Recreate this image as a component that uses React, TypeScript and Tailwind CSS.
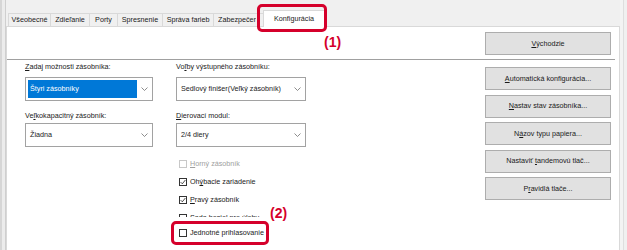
import type { ReactNode } from "react";

const tabs = [
  { label: "Všeobecné", w: "w-[42px]" },
  { label: "Zdieľanie", w: "w-[39px]" },
  { label: "Porty", w: "w-[28px]" },
  { label: "Spresnenie", w: "w-[45px]" },
  { label: "Správa farieb", w: "w-[51px]" },
];

function Chevron() {
  return (
    <svg width="7" height="4" viewBox="0 0 7 4" className="shrink-0">
      <path d="M0.5 0.5 L3.5 3.5 L6.5 0.5" fill="none" stroke="#707070" strokeWidth="0.8" />
    </svg>
  );
}

function Select({ children, active }: { children: ReactNode; active?: boolean }) {
  return (
    <div className="h-[24px] border border-[#a2a2a2] bg-white flex items-center pl-[2px] pr-[4px] py-[2px]">
      <div
        className={
          active
            ? "flex-1 h-full flex items-center bg-[#0078d7] text-white pl-[2px] mr-[4px]"
            : "flex-1 h-full flex items-center pl-[2px] mr-[4px]"
        }
      >
        {children}
      </div>
      <Chevron />
    </div>
  );
}

function Check({ checked, disabled }: { checked?: boolean; disabled?: boolean }) {
  return (
    <span
      className={
        disabled
          ? "w-[8px] h-[8px] border border-[#c8c8c8] bg-white shrink-0"
          : "w-[8px] h-[8px] border border-[#333] bg-white shrink-0 flex items-center justify-center"
      }
    >
      {checked && (
        <svg width="6" height="6" viewBox="0 0 6 6">
          <path d="M0.6 3.1 L2.3 4.8 L5.4 1" fill="none" stroke="#222" strokeWidth="0.8" />
        </svg>
      )}
    </span>
  );
}

function CheckRow({ children, checked, disabled }: { children: ReactNode; checked?: boolean; disabled?: boolean }) {
  return (
    <div className={disabled ? "h-[18px] flex items-center gap-[3px] text-[#a0a0a0]" : "h-[18px] flex items-center gap-[3px]"}>
      <Check checked={checked} disabled={disabled} />
      <span>{children}</span>
    </div>
  );
}

function Btn({ children }: { children: ReactNode }) {
  return (
    <div className="h-[23px] w-[126px] border border-[#adadad] bg-[#e1e1e1] flex items-center justify-center">
      {children}
    </div>
  );
}

export default function App() {
  return (
    <div className="relative w-[627px] h-[250px] overflow-hidden bg-[#f0f0f0] flex font-['Liberation_Sans',Arial,sans-serif] text-[7.2px] leading-none text-[#1a1a1a]">
      {/* left edge */}
      <div className="w-[6px] h-full flex">
        <div className="w-[2px] h-full bg-[#d6d6d6]" />
        <div className="w-[3px] h-full bg-[#ececec]" />
        <div className="w-px h-full bg-[#cfcfcf]" />
      </div>

      <div className="flex-1 flex flex-col pt-[13px] pl-px">
        {/* tab strip */}
        <div className="h-[13px] flex items-end shrink-0 pl-px">
          {tabs.map((t) => (
            <div
              key={t.label}
              className={`${t.w} h-[13px] border-l border-t border-[#d9d9d9] flex items-center justify-center whitespace-nowrap`}
            >
              {t.label}
            </div>
          ))}
          <div className="w-[52px] h-[13px] border-l border-t border-[#d9d9d9] flex items-center pl-[4px] whitespace-nowrap">
            <span className="w-[38px] overflow-hidden">Zabezpečenie</span>
          </div>
          <div className="relative z-10 -ml-[2px] -mb-px w-[62px] h-[17px] bg-white border border-b-0 border-[#d9d9d9] flex items-center justify-center">
            Konfigurácia
          </div>
        </div>

        {/* page */}
        <div className="flex-1 -ml-px bg-white border border-b-0 border-[#d9d9d9] flex flex-col">
          <div className="h-[32px] flex justify-end pt-[5px] pr-[8px]">
            <Btn>
              <span>
                <u>V</u>ýchodzie
              </span>
            </Btn>
          </div>
          <div className="h-px bg-[#a0a0a0] mr-[4px]" />

          <div className="flex-1 flex pl-[18px] pr-[8px]">
            <div className="w-[128px] flex flex-col pt-px">
              <div className="h-[12px] flex items-center">
                <span>
                  <u>Z</u>adaj možnosti zásobníka:
                </span>
              </div>
              <div className="mt-[4px]">
                <Select active>Štyri zásobníky</Select>
              </div>
              <div className="h-[12px] mt-[9px] flex items-center">
                <span>
                  Ve<u>ľ</u>kokapacitný zásobník:
                </span>
              </div>
              <div className="mt-px">
                <Select>Žiadna</Select>
              </div>
            </div>

            <div className="w-[130px] ml-[23px] flex flex-col pt-px">
              <div className="h-[12px] flex items-center">
                <span>
                  Vo<u>ľ</u>by výstupného zásobníku:
                </span>
              </div>
              <div className="mt-[4px]">
                <Select>Sedlový finišer(Veľký zásobník)</Select>
              </div>
              <div className="h-[12px] mt-[9px] flex items-center">
                <span>
                  <u>D</u>ierovací modul:
                </span>
              </div>
              <div className="mt-px">
                <Select>2/4 diery</Select>
              </div>

              <div className="mt-[8px] pl-[3px] flex flex-col">
                <CheckRow disabled>
                  <u>H</u>orný zásobník
                </CheckRow>
                <CheckRow checked>
                  Oh<u>ý</u>bacie zariadenie
                </CheckRow>
                <CheckRow checked>
                  <u>P</u>ravý zásobník
                </CheckRow>
                <CheckRow>Sada hesiel pre úlohy</CheckRow>
              </div>

              <div className="relative z-10 -mt-[10px] -ml-[5px] w-[98px] bg-white pt-[4px]">
                <div className="h-[24px] border-[3px] border-[#d5002b] rounded-[5px] bg-white flex items-center gap-[3px] pl-[5px]">
                  <Check />
                  <span>Jednotné prihlasovanie</span>
                </div>
              </div>
            </div>

            <div className="ml-auto flex flex-col gap-[4.5px] pt-[7px]">
              <Btn>
                <span>
                  <u>A</u>utomatická konfigurácia...
                </span>
              </Btn>
              <Btn>
                <span>
                  <u>N</u>astav stav zásobníka...
                </span>
              </Btn>
              <Btn>
                <span>
                  N<u>á</u>zov typu papiera...
                </span>
              </Btn>
              <Btn>
                <span>
                  Nastaviť <u>t</u>andemovú tlač...
                </span>
              </Btn>
              <Btn>
                <span>
                  P<u>r</u>avidlá tlače...
                </span>
              </Btn>
            </div>
          </div>
        </div>
      </div>

      {/* right edge */}
      <div className="w-[7px] h-full flex">
        <div className="w-[3px] h-full bg-[#f3f3f3]" />
        <div className="w-px h-full bg-[#dedede]" />
        <div className="w-[3px] h-full bg-[#f0f0f0]" />
      </div>

      {/* callouts */}
      <div className="absolute left-[257px] top-[4px] w-[70px] h-[28px] border-[3px] border-[#d5002b] rounded-[5px] z-20" />
      <div className="absolute left-[324px] top-[35px] text-[14px] font-bold text-[#d5002b] leading-none">(1)</div>
      <div className="absolute left-[270px] top-[206px] text-[14px] font-bold text-[#d5002b] leading-none">(2)</div>
    </div>
  );
}
